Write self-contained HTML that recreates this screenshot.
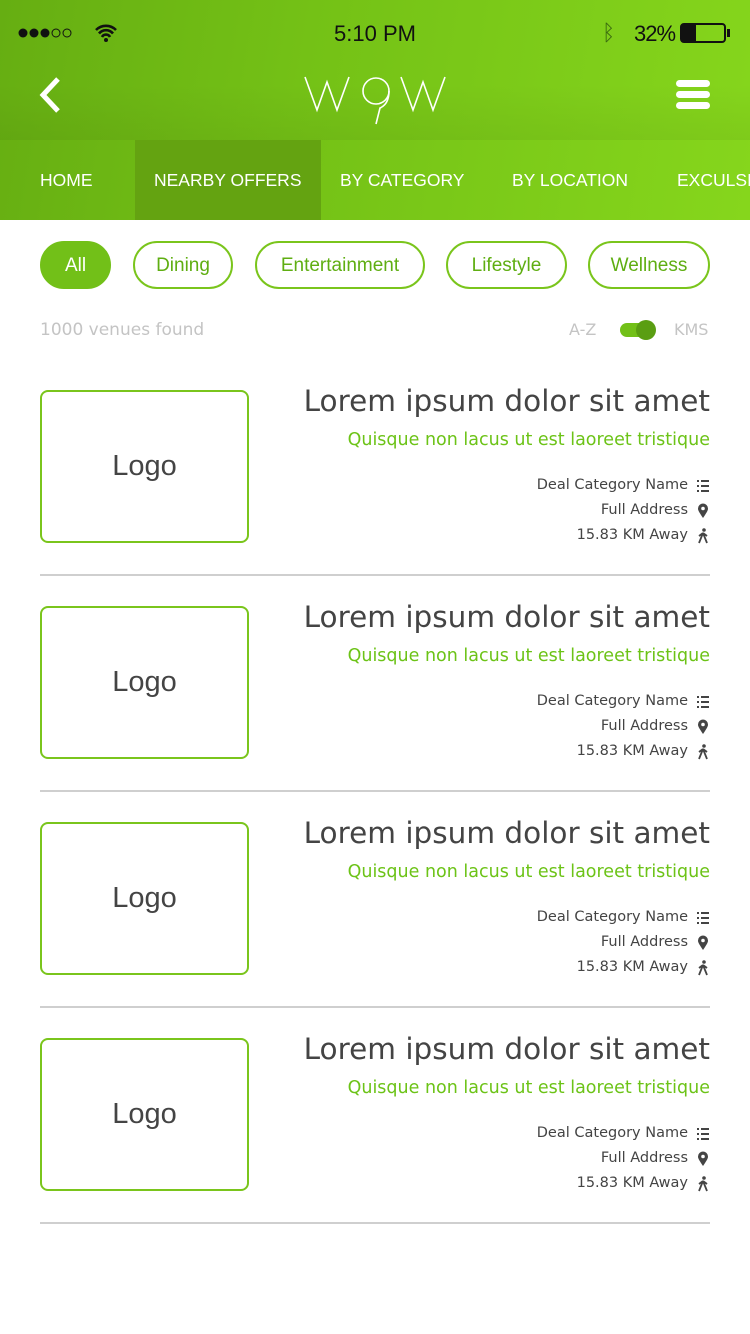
<!DOCTYPE html><html><head><style>
*{margin:0;padding:0;box-sizing:border-box}
body{width:750px;height:1334px;background:#fff;font-family:"Liberation Sans",sans-serif;position:relative;overflow:hidden}
.hd{position:absolute;left:0;top:0;width:750px;height:220px;background:linear-gradient(100deg,#66ae12 0%,#74c116 40%,#86d61c 100%)}
.top{position:absolute;left:0;top:0;width:750px;height:140px;background:linear-gradient(180deg,rgba(0,0,0,0) 60%,rgba(0,0,0,0.05) 100%)}
.tab{position:absolute;top:140px;height:80px;line-height:80px;color:#fff;font-size:17.5px;white-space:nowrap}
.chip{position:absolute;top:241px;height:48px;border:2px solid #7ac51c;border-radius:24px;color:#5fae12;font-size:19px;text-align:center;line-height:46px}
.a{position:absolute;font-family:"DejaVu Sans",sans-serif}
.logo{position:absolute;left:40px;width:209px;height:153px;border:2px solid #7ac51c;border-radius:8px;text-align:center;line-height:149px;font-size:29px;color:#444}
.t{position:absolute;right:40px;font-size:29.5px;color:#444;white-space:nowrap}
.s{position:absolute;right:40px;font-size:17.5px;color:#6cc317;white-space:nowrap}
.d{position:absolute;right:62px;font-size:14.5px;color:#444;white-space:nowrap}
.ic{position:absolute;left:696px}
.hr{position:absolute;left:40px;width:670px;height:2px;background:#cfcfcf}
</style></head><body>
<div class="hd"></div><div class="top"></div>
<svg style="position:absolute;left:18px;top:27px" width="70" height="12"><circle cx="5" cy="6" r="4.5" fill="#111"/><circle cx="16" cy="6" r="4.5" fill="#111"/><circle cx="27" cy="6" r="4.5" fill="#111"/><circle cx="38" cy="6" r="4" fill="none" stroke="#111" stroke-width="1"/><circle cx="49" cy="6" r="4" fill="none" stroke="#111" stroke-width="1"/></svg>
<svg style="position:absolute;left:94px;top:23px" width="24" height="20" viewBox="0 0 24 20"><path d="M2 7a14 14 0 0 1 20 0M5 10.5a9 9 0 0 1 14 0M8 14a4.5 4.5 0 0 1 8 0" stroke="#111" stroke-width="2.6" fill="none"/><circle cx="12" cy="17" r="2" fill="#111"/></svg>
<div style="position:absolute;left:0;width:750px;text-align:center;top:21px;font-size:22px;color:#111">5:10 PM</div>
<div style="position:absolute;left:602px;top:20px;font-size:22px;color:#3a6a10">ᛒ</div>
<div style="position:absolute;left:634px;top:21px;font-size:22px;color:#111;letter-spacing:-1px">32%</div>
<div style="position:absolute;left:680px;top:23px;width:46px;height:20px;border:2px solid #111;border-radius:4px"><div style="width:14px;height:100%;background:#111"></div></div>
<div style="position:absolute;left:727px;top:29px;width:3px;height:8px;background:#111"></div>
<svg style="position:absolute;left:38px;top:76px" width="24" height="38"><path d="M20 3 L5 19 L20 35" stroke="#fff" stroke-width="5" fill="none"/></svg>
<svg style="position:absolute;left:300px;top:74px" width="150" height="52" fill="none" stroke="#fff" stroke-width="1.6"><path d="M5 3 L17 36 L27 8 L37 36 L49 3"/><circle cx="76" cy="17" r="13"/><path d="M89 17 Q89 30 80 34 L76 50"/><path d="M101 3 L113 36 L123 8 L133 36 L145 3"/></svg>
<div style="position:absolute;left:676px;top:80px;width:34px;height:7px;background:#fff;border-radius:4px"></div>
<div style="position:absolute;left:676px;top:91px;width:34px;height:7px;background:#fff;border-radius:4px"></div>
<div style="position:absolute;left:676px;top:102px;width:34px;height:7px;background:#fff;border-radius:4px"></div>
<div style="position:absolute;left:135px;top:140px;width:186px;height:80px;background:#64a311"></div>
<div class="tab" style="left:40px">HOME</div>
<div class="tab" style="left:154px">NEARBY OFFERS</div>
<div class="tab" style="left:340px">BY CATEGORY</div>
<div class="tab" style="left:512px">BY LOCATION</div>
<div class="tab" style="left:677px">EXCULSIVE</div>
<div class="chip" style="left:40px;width:71px;background:#72c018;border-color:#72c018;color:#fff">All</div>
<div class="chip" style="left:133px;width:100px">Dining</div>
<div class="chip" style="left:255px;width:170px">Entertainment</div>
<div class="chip" style="left:446px;width:121px">Lifestyle</div>
<div class="chip" style="left:588px;width:122px">Wellness</div>
<div class="a" style="left:40px;top:320px;font-size:17px;color:#c4c4c4">1000 venues found</div>
<div class="a" style="left:569px;top:320px;font-size:16px;color:#c4c4c4">A-Z</div>
<div style="position:absolute;left:620px;top:323px;width:34px;height:14px;border-radius:7px;background:#72c018"></div>
<div style="position:absolute;left:636px;top:320px;width:20px;height:20px;border-radius:10px;background:#5a9e12"></div>
<div class="a" style="left:674px;top:320px;font-size:16px;color:#c4c4c4">KMS</div>
<div id="list"></div>
<script>
var h='';for(var i=0;i<4;i++){var o=i*216;
h+='<div class="logo" style="top:'+(390+o)+'px">Logo</div>'+
'<div class="t a" style="top:'+(384+o)+'px">Lorem ipsum dolor sit amet</div>'+
'<div class="s a" style="top:'+(430+o)+'px">Quisque non lacus ut est laoreet tristique</div>'+
'<div class="d a" style="top:'+(477+o)+'px">Deal Category Name</div>'+
'<div class="d a" style="top:'+(502+o)+'px">Full Address</div>'+
'<div class="d a" style="top:'+(527+o)+'px">15.83 KM Away</div>'+
'<svg class="ic" style="top:'+(479+o)+'px" width="14" height="14"><rect x="1" y="1" width="2" height="2" fill="#444"/><rect x="5" y="1" width="8" height="2" fill="#444"/><rect x="1" y="6" width="2" height="2" fill="#444"/><rect x="5" y="6" width="8" height="2" fill="#444"/><rect x="1" y="11" width="2" height="2" fill="#444"/><rect x="5" y="11" width="8" height="2" fill="#444"/></svg>'+
'<svg class="ic" style="top:'+(503+o)+'px" width="14" height="16"><path d="M7 15C3 9 2 7.5 2 5.5a5 5 0 0 1 10 0c0 2-1 3.5-5 9.5z" fill="#444"/><circle cx="7" cy="5.5" r="1.8" fill="#fff"/></svg>'+
'<svg class="ic" style="top:'+(528+o)+'px" width="14" height="16"><circle cx="8" cy="2" r="1.8" fill="#444"/><path d="M7 5L5 10 3 15M7 5l2 5 2 5M7 5L3 8M7 5l4 3" stroke="#444" stroke-width="1.8" fill="none"/></svg>'+
'<div class="hr" style="top:'+(574+o)+'px"></div>';}
document.getElementById('list').innerHTML=h;
</script>
</body></html>
